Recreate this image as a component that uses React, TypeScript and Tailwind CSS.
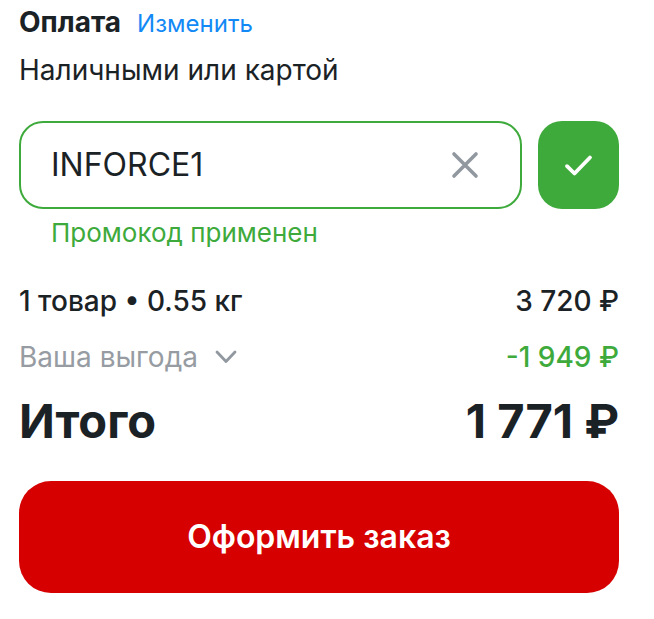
import React, { useState } from 'react';

const App: React.FC = () => {
  const [promoCode, setPromoCode] = useState('INFORCE1');
  const [isApplied, setIsApplied] = useState(true);
  const [showDetails, setShowDetails] = useState(false);

  const handleChange = (value: string) => {
    setPromoCode(value);
    setIsApplied(false);
  };

  const handleSubmit = (e: React.FormEvent) => {
    e.preventDefault();
    setIsApplied(promoCode.trim() !== '');
  };

  return (
    <main className="bg-white pl-[19px] pr-[35px] pb-6 font-['Inter',sans-serif] text-[28px] leading-[44px] text-[#1b2226]">
      <section>
        <div className="flex h-11 items-baseline gap-4">
          <h2 className="font-bold">Оплата</h2>
          <a href="#payment" className="text-2xl text-[#1389f5]">
            Изменить
          </a>
        </div>
        <p className="mt-1">Наличными или картой</p>
      </section>

      <form onSubmit={handleSubmit} className="mt-[29px]">
        <div className="flex gap-4">
          <div className="flex h-[88px] min-w-0 flex-1 items-center rounded-3xl border-2 border-[#3eaa3c] pl-[30px] pr-[41px]">
            <input
              type="text"
              value={promoCode}
              onChange={(e) => handleChange(e.target.value)}
              aria-label="Промокод"
              aria-describedby="promoStatus"
              className="min-w-0 flex-1 bg-transparent text-[32px] outline-none"
            />
            <button type="button" onClick={() => handleChange('')} aria-label="Очистить">
              <svg className="h-7 w-7" viewBox="0 0 28 28" fill="none" stroke="#91989f" strokeWidth={3.6} strokeLinecap="round">
                <path d="M3 3l22 22M25 3L3 25" />
              </svg>
            </button>
          </div>
          <button
            type="submit"
            aria-label="Применить"
            className="flex w-[81px] items-center justify-center rounded-3xl bg-[#3eaa3c]"
          >
            <svg className="h-8 w-8" viewBox="0 0 32 32" fill="none" stroke="white" strokeWidth={3.8} strokeLinecap="round" strokeLinejoin="round">
              <path d="M4 17.200l7.500 7.300L27 8.500" />
            </svg>
          </button>
        </div>
        <p id="promoStatus" className="mt-1 h-10 pl-8 text-[26px] leading-10 text-[#3eaa3c]">
          {isApplied && 'Промокод применен'}
        </p>
      </form>

      <section className="mt-5">
        <div className="flex h-14 items-center justify-between font-medium">
          <span>1 товар • 0.55 кг</span>
          <span>3 720 ₽</span>
        </div>
        <div className="flex h-14 items-center justify-between">
          <button
            type="button"
            onClick={() => setShowDetails(!showDetails)}
            aria-expanded={showDetails}
            className="flex items-center gap-4 text-[#969ca2]"
          >
            Ваша выгода
            <svg className="h-6 w-6" viewBox="0 0 24 24" fill="none" stroke="#91989f" strokeWidth={2.8} strokeLinecap="round" strokeLinejoin="round">
              <path d="M3 7l9 9.500L21 7" />
            </svg>
          </button>
          <span className="font-medium text-[#3eaa3c]">-1 949 ₽</span>
        </div>
        <div className="flex h-18 items-center justify-between text-[47px] font-bold">
          <span>Итого</span>
          <span>1 771 ₽</span>
        </div>
      </section>

      <button type="button" className="mt-6 h-28 w-full rounded-[32px] bg-[#d60000] text-[32px] font-semibold text-white">
        Оформить заказ
      </button>
    </main>
  );
};

export default App;
